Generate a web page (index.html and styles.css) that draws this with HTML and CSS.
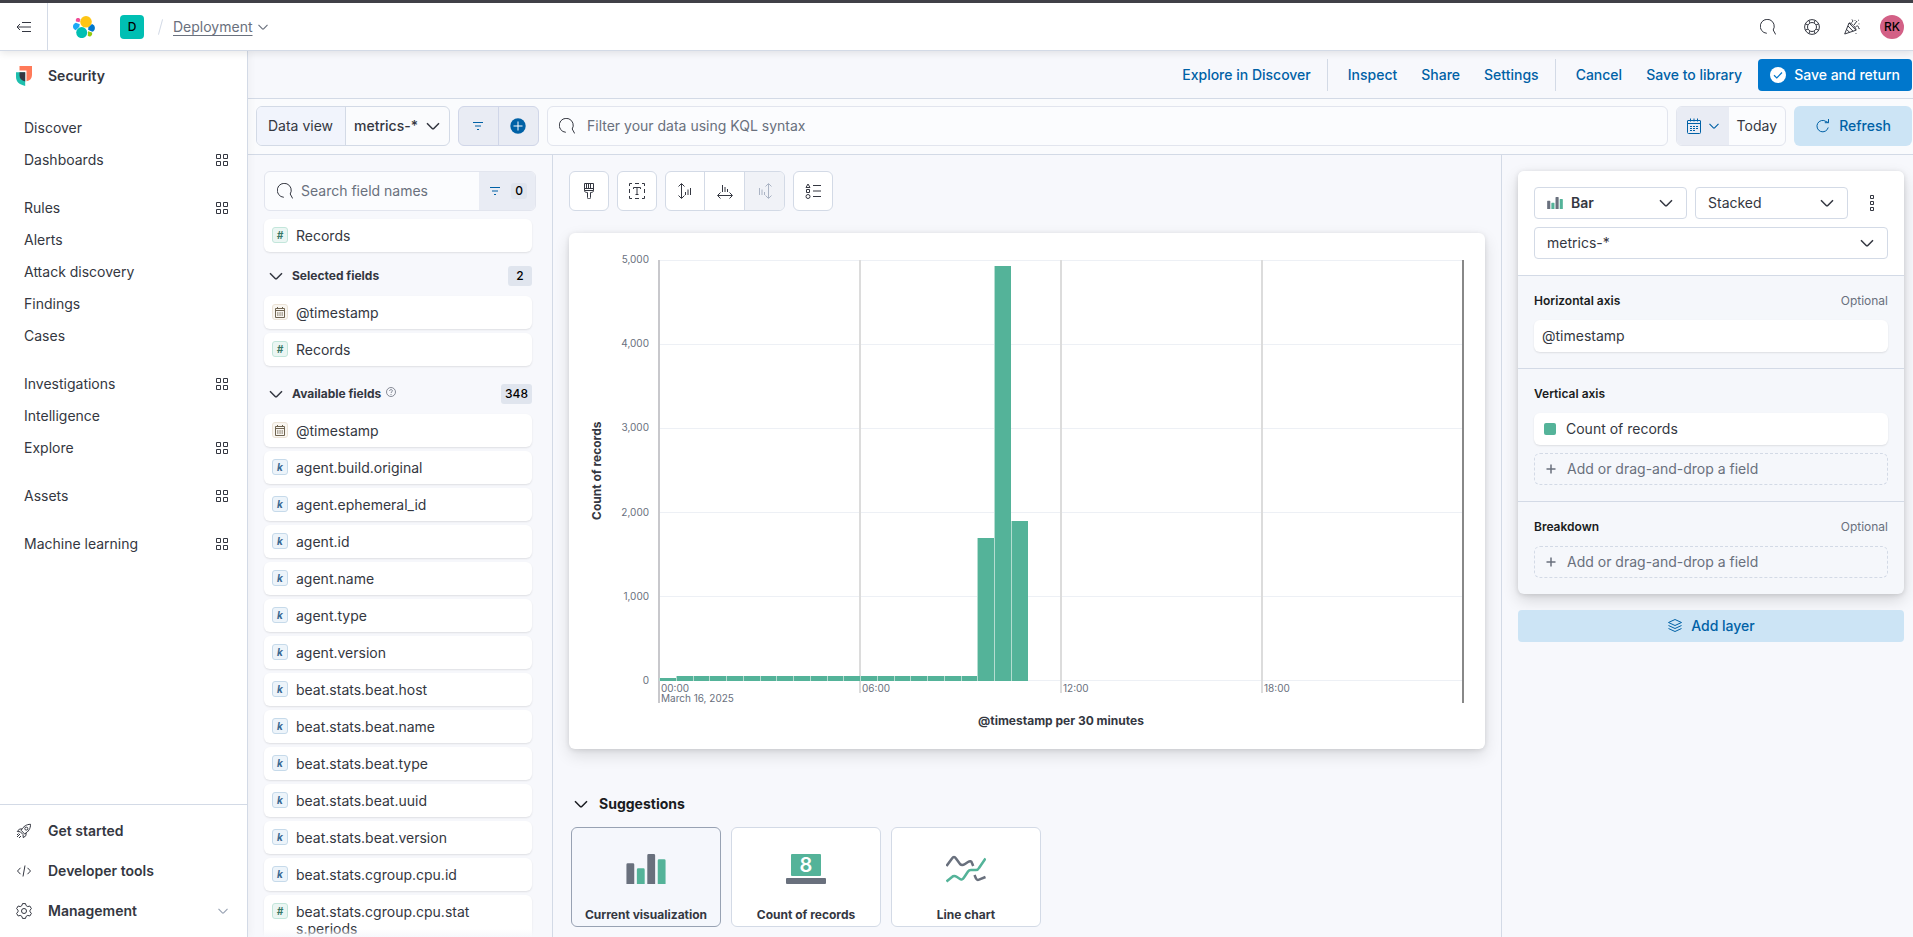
FILE: index.html
```
<!DOCTYPE html>
<html lang="en">
  <head>
    <meta charset="UTF-8" />
    <meta name="viewport" content="width=device-width, initial-scale=1.0" />
    <title>Lens - Elastic</title>
    <link rel="stylesheet" href="styles.css">
  </head>
  <body>
    <svg class="sprite" aria-hidden="true">
      <symbol id="chevron" viewBox="0 0 16 16"><path d="M2 5.2l5.2 5.3a1.1 1.1 0 0 0 1.6 0L14 5.2" /></symbol>
      <symbol id="search" viewBox="0 0 16 16"><path d="M6.8 14.3A7 7 0 1 1 13.200 11l2.500 4.500" /></symbol>
      <symbol id="filter" viewBox="0 0 16 16"><path d="M3 4.5h10M5 8h6M7 11.5h2" /></symbol>
      <symbol id="apps" viewBox="0 0 12 12"><path d="M.5.5h4v4h-4zM7.5.5h4v4h-4zM.5 7.5h4v4h-4zM7.5 7.5h4v4h-4z" /></symbol>
      <symbol id="plus" viewBox="0 0 16 16"><path d="M8 3.5v9M3.5 8h9" /></symbol>
      <symbol id="calendar" viewBox="0 0 16 16">
        <path d="M2 2.5h12a.5.5 0 0 1 .5.5v11.5a1 1 0 0 1-1 1h-11a1 1 0 0 1-1-1V3a.5.5 0 0 1 .5-.5zM1.500 5.500h13M4.500 .5v3M11.500 .5v3M8 .5v3" />
        <path d="M4 8.500h2M7 8.500h2M10 8.500h2M4 10.500h2M7 10.500h2M10 10.500h2M4 12.500h2M7 12.500h2" />
      </symbol>
      <symbol id="date" viewBox="0 0 10 11">
        <path d="M.5 1.500h9v9h-9zM.5 3.500h9M2.500 0v2M7.500 0v2" />
        <path d="M2 6h1.500M4.300 6h1.500M6.500 6H8M2 8h1.500M4.300 8h1.500M6.500 8H8" />
      </symbol>
      <symbol id="bar-icon" viewBox="0 0 30 23">
        <path class="gray" d="M0 8a1 1 0 0 1 1-1h4a1 1 0 0 1 1 1v15H0zM16 1a1 1 0 0 1 1-1h4a1 1 0 0 1 1 1v22h-6z" />
        <path class="green" d="M8 12a1 1 0 0 1 1-1h4a1 1 0 0 1 1 1v11H8zM24 5a1 1 0 0 1 1-1h4a1 1 0 0 1 1 1v18h-6z" />
      </symbol>
    </svg>

    <header class="top-bar">
      <button class="toggle" aria-label="Collapse side navigation">
        <svg class="icon" viewBox="0 0 16 16"><path d="M6 3.500h9M1.500 8H15M6 12.500h9M4 5L1 8l3 3" /></svg>
      </button>
      <a class="logo" href="#" aria-label="Elastic home">
        <svg width="22" height="22" viewBox="0 0 22 22">
          <circle cx="13" cy="5.800" r="5.800" fill="#fec514" />
          <circle cx="8.700" cy="16.600" r="5.500" fill="#00bfb3" />
          <path fill="#f04e98" d="M3.500 2.400c1.500-1 3.500-.4 3.800 1.200L6.500 6.200 3 5.600C2.600 4.200 2.800 3 3.500 2.400z" />
          <path fill="#1ba9f5" d="M2.800 6.800l4 1.500-.6 2.700-3.500 3.300C-.8 13-1 8.200 2.800 6.800z" />
          <path fill="#0077cc" d="M19 8c3.800 1.200 3.800 6.400.3 7.700l-4.200-2 .4-2.500z" />
          <path fill="#93c90e" d="M15 15.200l4 1.400c.5 1.500 0 3-1.300 3.600-1 .5-2 .3-2.900-.4z" />
        </svg>
      </a>
      <span class="avatar space">D</span>
      <span class="slash"></span>
      <button class="crumb"><span>Deployment</span><svg class="icon small"><use href="#chevron" /></svg></button>
      <div class="top-actions">
        <button aria-label="Search"><svg class="icon"><use href="#search" /></svg></button>
        <button aria-label="Help">
          <svg class="icon" viewBox="0 0 16 16"><circle cx="8" cy="8" r="7.400" /><circle cx="8" cy="8" r="4.500" /><path d="M5 1.300l.8 2.600M11 1.300l-.8 2.600M5 14.700l.8-2.600M11 14.700l-.8-2.600M1.300 5l2.600.8M1.300 11l2.600-.8M14.700 5l-2.600.8M14.700 11l-2.600-.8" /></svg>
        </button>
        <button aria-label="What's new">
          <svg class="icon" viewBox="0 0 16 16"><path d="M5 4L.7 15 12 11.200zM5 4c2-.8 7.800 5.500 7 7.200M4 7l5 5.200M2.600 10.500l3.200 3M7.500 3.500c1.500-.5 1.500-2 .5-3M10 6l3-4M11.500 8c1.500-1.500 3-1.300 3 .3s.6 1.700 1.300 1M11 1v.8M14.500.8v.8M15 4.500v.8M12 14v.8" /></svg>
        </button>
        <span class="avatar user">RK</span>
      </div>
    </header>

    <div class="shell">
      <nav class="sidebar">
        <a class="solution" href="#">
          <svg width="16" height="20" viewBox="0 0 16 20">
            <path fill="#ff7a59" d="M3.500 0H16v9c0 3.500-2 5.500-5.500 6.300V4.500h-7z" />
            <path fill="#1fbfae" d="M0 6.200h9.200V20C3 18.500 0 15.500 0 11z" />
            <path fill="#343741" d="M3.500 6.200h5.700v9.200c-4-1-5.700-3-5.700-5.600z" />
          </svg>
          Security
        </a>
        <ul>
          <li><a href="#">Discover</a></li>
          <li><a href="#">Dashboards</a><svg class="apps"><use href="#apps" /></svg></li>
        </ul>
        <ul>
          <li><a href="#">Rules</a><svg class="apps"><use href="#apps" /></svg></li>
          <li><a href="#">Alerts</a></li>
          <li><a href="#">Attack discovery</a></li>
          <li><a href="#">Findings</a></li>
          <li><a href="#">Cases</a></li>
        </ul>
        <ul>
          <li><a href="#">Investigations</a><svg class="apps"><use href="#apps" /></svg></li>
          <li><a href="#">Intelligence</a></li>
          <li><a href="#">Explore</a><svg class="apps"><use href="#apps" /></svg></li>
        </ul>
        <ul>
          <li><a href="#">Assets</a><svg class="apps"><use href="#apps" /></svg></li>
        </ul>
        <ul>
          <li><a href="#">Machine learning</a><svg class="apps"><use href="#apps" /></svg></li>
        </ul>
        <div class="nav-footer">
          <a href="#">
            <svg class="icon" viewBox="0 0 16 16"><path d="M14.500 1.300c-4 0-7 2-9.300 6L8.600 11c4-2.500 6-5.500 5.900-9.700zM6 6H3.500L1.300 8.500l3 .3M10 9.800v2.700l-2.700 2.200-.3-3M4.300 8.800L7 11.500M4 11l-3 3M2.500 10.500l-1.500 1.500M5 13l-2 2" /><circle cx="10.300" cy="5.600" r="1.500" /></svg>
            Get started
          </a>
          <a href="#">
            <svg class="icon" viewBox="0 0 16 16"><path d="M4.500 4.800L1.500 8l3 3.200M11.500 4.800l3 3.200-3 3.200M9 2.500L7 13.500" /></svg>
            Developer tools
          </a>
          <a href="#">
            <svg class="icon" viewBox="0 0 16 16"><path d="M6.500.6h3l.6 2 1.700 1 2-.6 1.600 2.600L14 7.200v1.600l1.400 1.600-1.600 2.600-2-.6-1.700 1-.6 2h-3l-.6-2-1.700-1-2 .6L.6 10.400 2 8.800V7.200L.6 5.600 2.200 3l2 .6 1.700-1z" /><circle cx="8" cy="8" r="2.500" /></svg>
            Management
            <svg class="icon small"><use href="#chevron" /></svg>
          </a>
        </div>
      </nav>

      <main>
        <div class="app-menu">
          <a href="#">Explore in Discover</a>
          <span class="divider"></span>
          <a href="#">Inspect</a>
          <a href="#">Share</a>
          <a href="#">Settings</a>
          <span class="divider"></span>
          <a href="#">Cancel</a>
          <a href="#">Save to library</a>
          <button class="primary">
            <svg width="16" height="16" viewBox="0 0 16 16"><circle cx="8" cy="8" r="8" fill="#fff" /><path d="M4 8.200l2.800 2.700L12 5.500" fill="none" stroke="#0077cc" stroke-width="1.200" /></svg>
            Save and return
          </button>
        </div>

        <div class="query-bar">
          <div class="data-view">
            <span>Data view</span>
            <button>metrics-*<svg class="icon bold"><use href="#chevron" /></svg></button>
          </div>
          <div class="filter-group">
            <button aria-label="Query menu"><svg class="icon"><use href="#filter" /></svg></button>
            <button aria-label="Add filter">
              <svg width="16" height="16" viewBox="0 0 16 16"><circle cx="8" cy="8" r="7.700" fill="#0061a6" /><path d="M8 3.500v9M3.500 8h9" stroke="#fff" /></svg>
            </button>
          </div>
          <div class="kql">
            <svg class="icon"><use href="#search" /></svg>
            <input type="text" aria-label="Filter your data" placeholder="Filter your data using KQL syntax" />
          </div>
          <div class="date-picker">
            <button class="quick" aria-label="Date quick select">
              <svg class="icon"><use href="#calendar" /></svg>
              <svg class="icon small"><use href="#chevron" /></svg>
            </button>
            <button class="range">Today</button>
          </div>
          <button class="refresh">
            <svg class="icon" viewBox="0 0 16 16"><path d="M13.200 9.500a5.700 5.700 0 1 1-2.200-6l2.500 1.200M13.500 1v3.700h-3.700" /></svg>
            Refresh
          </button>
        </div>

        <div class="workspace">
          <aside class="fields">
            <div class="field-search">
              <svg class="icon"><use href="#search" /></svg>
              <input type="text" aria-label="Search field names" placeholder="Search field names" />
              <button aria-label="Filter by type"><svg class="icon"><use href="#filter" /></svg><span>0</span></button>
            </div>
            <div class="field-list">
              <div class="field"><i class="token number">#</i><span>Records</span></div>
              <h3><svg class="icon bold"><use href="#chevron" /></svg>Selected fields<b>2</b></h3>
              <div class="field"><i class="token date"><svg><use href="#date" /></svg></i><span>@timestamp</span></div>
              <div class="field"><i class="token number">#</i><span>Records</span></div>
              <h3>
                <svg class="icon bold"><use href="#chevron" /></svg>Available fields
                <svg class="hint" viewBox="0 0 10 10"><circle cx="5" cy="5" r="4.500" /><path d="M3.600 4c0-2 2.800-1.800 2.800-.2C6.400 5 5 4.800 5 6M5 7v1" /></svg>
                <b>348</b>
              </h3>
              <div class="field"><i class="token date"><svg><use href="#date" /></svg></i><span>@timestamp</span></div>
              <div class="field"><i class="token">k</i><span>agent.build.original</span></div>
              <div class="field"><i class="token">k</i><span>agent.ephemeral_id</span></div>
              <div class="field"><i class="token">k</i><span>agent.id</span></div>
              <div class="field"><i class="token">k</i><span>agent.name</span></div>
              <div class="field"><i class="token">k</i><span>agent.type</span></div>
              <div class="field"><i class="token">k</i><span>agent.version</span></div>
              <div class="field"><i class="token">k</i><span>beat.stats.beat.host</span></div>
              <div class="field"><i class="token">k</i><span>beat.stats.beat.name</span></div>
              <div class="field"><i class="token">k</i><span>beat.stats.beat.type</span></div>
              <div class="field"><i class="token">k</i><span>beat.stats.beat.uuid</span></div>
              <div class="field"><i class="token">k</i><span>beat.stats.beat.version</span></div>
              <div class="field"><i class="token">k</i><span>beat.stats.cgroup.cpu.id</span></div>
              <div class="field"><i class="token number">#</i><span>beat.stats.cgroup.cpu.stats.periods</span></div>
            </div>
          </aside>

          <section class="editor">
            <div class="toolbar">
              <div class="tools">
                <button aria-label="Visual options">
                  <svg class="icon" viewBox="0 0 16 16"><path d="M3.500.5h9v7h-9zM3.500 5.500h9M5.500.5v5M7.500.5v5M9.500.5v5M3.500 7.500c0 1.500 1 2 3 2v5a1.500 1.500 0 0 0 3 0v-5c2 0 3-.5 3-2" /></svg>
                </button>
              </div>
              <div class="tools">
                <button aria-label="Titles and text">
                  <svg class="icon" viewBox="0 0 16 16"><path d="M.5 3V.5H3M6 .5h4M13 .5h2.500V3M15.500 6v4M15.500 13v2.500H13M10 15.500H6M3 15.500H.5V13M.5 10V6M4.500 6V4.500h7V6M8 4.500v7M6.500 11.500h3" /></svg>
                </button>
              </div>
              <div class="tools">
                <button aria-label="Left axis">
                  <svg class="icon" viewBox="0 0 16 16"><path d="M4.500 1v14M1.500 3.500l3-3 3 3M1.500 12.500l3 3 3-3M8.500 9v3M11 6.500V12M13.500 5v7" /></svg>
                </button>
                <button aria-label="Bottom axis">
                  <svg class="icon" viewBox="0 0 16 16"><path d="M1 12.500h14M3.500 9.500l-3 3 3 3M12.500 9.500l3 3-3 3M5.500 2v7M8 4v5M10.500 6v3" /></svg>
                </button>
                <button aria-label="Right axis" disabled>
                  <svg class="icon" viewBox="0 0 16 16"><path d="M11.500 1v14M8.500 3.500l3-3 3 3M8.500 12.500l3 3 3-3M2.500 5v7M5 6.500V12M7.500 9v3" /></svg>
                </button>
              </div>
              <div class="tools">
                <button aria-label="Legend">
                  <svg class="icon" viewBox="0 0 16 16"><path d="M3 1L1 4.500h4zM1.500 6.500h3v3h-3zM8 2.500h8M8 8h8M8 13.500h8" /><circle cx="3" cy="13.500" r="2" /></svg>
                </button>
              </div>
            </div>

            <div class="chart-card">
              <div class="y-title">Count of records</div>
              <div class="y-labels">
                <span>5,000</span><span>4,000</span><span>3,000</span><span>2,000</span><span>1,000</span><span>0</span>
              </div>
              <div class="h-lines"><i></i><i></i><i></i><i></i><i></i><i></i></div>
              <div class="ticks">
                <div class="first"><span>00:00<br>March 16, 2025</span></div>
                <div><span>06:00</span></div>
                <div><span>12:00</span></div>
                <div><span>18:00</span></div>
              </div>
              <div class="bars"></div>
              <div class="x-title">@timestamp per 30 minutes</div>
            </div>

            <div class="suggestions">
              <h2><svg class="icon bold"><use href="#chevron" /></svg>Suggestions</h2>
              <div class="cards">
                <button class="current">
                  <svg width="40" height="30"><use href="#bar-icon" /></svg>
                  <span>Current visualization</span>
                </button>
                <button>
                  <svg width="40" height="30" viewBox="0 0 40 30"><rect class="green" x="5" width="30" height="22" rx="1" /><rect class="gray" y="24" width="40" height="6" rx="1" /><text x="20" y="18">8</text></svg>
                  <span>Count of records</span>
                </button>
                <button>
                  <svg class="lines" width="40" height="30" viewBox="0 0 40 30"><path class="gray-line" d="M.5 12L6 4.500q2-3 4 0l4 5.500q2 2 5 0l3-2q3-2 4 1l1.200 3M28.500 21l1.500 3.500q1 2 3 1.200l6.500-2.700" /><path class="green-line" d="M.5 27.500L6 23q2-2 5 0l3 2q2 1.500 4-1.500l4-6q1-1.500 3-1.500h5q2 0 3-2l6.500-9.500" /></svg>
                  <span>Line chart</span>
                </button>
              </div>
            </div>
          </section>

          <aside class="config">
            <div class="layer">
              <div class="layer-head">
                <div class="row">
                  <div class="select strong">
                    <svg width="16" height="12"><use href="#bar-icon" /></svg>
                    <select aria-label="Chart type"><option>Bar</option></select>
                    <svg class="icon bold"><use href="#chevron" /></svg>
                  </div>
                  <div class="select">
                    <select aria-label="Stacking"><option>Stacked</option></select>
                    <svg class="icon bold"><use href="#chevron" /></svg>
                  </div>
                  <button class="dots" aria-label="Layer actions">
                    <svg class="icon" viewBox="0 0 16 16"><path d="M6.500.5h3v3h-3zM6.500 6.500h3v3h-3zM6.500 12.500h3v3h-3z" /></svg>
                  </button>
                </div>
                <div class="select">
                  <select aria-label="Layer data view"><option>metrics-*</option></select>
                  <svg class="icon bold"><use href="#chevron" /></svg>
                </div>
              </div>
              <div class="dimension">
                <h4>Horizontal axis<small>Optional</small></h4>
                <button class="filled">@timestamp</button>
              </div>
              <div class="dimension">
                <h4>Vertical axis</h4>
                <button class="filled"><i class="swatch"></i>Count of records</button>
                <button class="empty"><svg class="icon bold"><use href="#plus" /></svg>Add or drag-and-drop a field</button>
              </div>
              <div class="dimension">
                <h4>Breakdown<small>Optional</small></h4>
                <button class="empty"><svg class="icon bold"><use href="#plus" /></svg>Add or drag-and-drop a field</button>
              </div>
            </div>
            <button class="add-layer">
              <svg class="icon" viewBox="0 0 16 16"><path d="M8 1.500l6.500 3L8 7.500l-6.500-3zM1.500 7.500l6.500 3 6.500-3M1.500 10.500l6.500 3 6.500-3" /></svg>
              Add layer
            </button>
          </aside>
        </div>
      </main>
    </div>

    <script>
      // records per 30 minutes, starting at midnight
      const counts = [35];
      for (let i = 1; i < 19; i++) counts.push(60);
      counts.push(1695, 4925, 1895);

      document.querySelector(".bars").innerHTML = counts
        .map((count) => `<i style="height: ${(count / 5000) * 100}%"></i>`)
        .join("");
    </script>
  </body>
</html>
```

FILE: styles.css
```
* {
  box-sizing: border-box;
}
body {
  margin: 0;
  height: 100vh;
  display: flex;
  flex-direction: column;
  overflow: hidden;
  font-family: Inter, "Liberation Sans", sans-serif;
  font-size: 14px;
  line-height: 20px;
  color: #343741;
  background: #f7f8fc;
}
button,
input,
select {
  font: inherit;
  color: inherit;
  background: none;
  border: none;
  padding: 0;
  margin: 0;
  outline: none;
}
button {
  cursor: pointer;
}
a {
  color: inherit;
  text-decoration: none;
}
h2,
h3,
h4,
ul {
  margin: 0;
  padding: 0;
  list-style: none;
}
svg {
  flex: none;
}
.sprite {
  position: absolute;
  width: 0;
  height: 0;
}
.icon {
  width: 16px;
  height: 16px;
  fill: none;
  stroke: currentColor;
  stroke-width: 1;
}
.icon.small {
  width: 12px;
  height: 12px;
  stroke-width: 1.5;
}
.icon.bold {
  stroke-width: 1.5;
}
.gray {
  fill: #69707d;
}
.green {
  fill: #54b399;
}

/* top bar */
.top-bar {
  position: relative;
  z-index: 2;
  flex: none;
  height: 51px;
  display: flex;
  align-items: center;
  background: #fff;
  border-top: 3px solid #404047;
  border-bottom: 1px solid #d3dae6;
  box-shadow: 0 2px 8px rgba(0, 0, 0, 0.1);
}
.toggle {
  width: 48px;
  height: 47px;
  display: flex;
  align-items: center;
  justify-content: center;
  border-right: 1px solid #d3dae6;
}
.logo {
  display: flex;
  margin: 0 25px;
}
.avatar {
  width: 24px;
  height: 24px;
  display: flex;
  align-items: center;
  justify-content: center;
  font-size: 12px;
  font-weight: 500;
  color: #000;
}
.space {
  border-radius: 4px;
  background: #00bfb3;
}
.user {
  border-radius: 50%;
  background: #d36086;
}
.slash {
  width: 1px;
  height: 16px;
  margin: 0 12px 0 16px;
  background: #d3dae6;
  transform: rotate(15deg);
}
.crumb {
  display: flex;
  align-items: center;
  gap: 4px;
  color: #69707d;
}
.crumb span {
  text-decoration: underline;
  text-underline-offset: 3px;
}
.top-actions {
  margin-left: auto;
  margin-right: 9px;
  display: flex;
  align-items: center;
}
.top-actions button {
  display: flex;
  padding: 0 12px;
}
.top-actions button + button {
  padding-left: 16px;
}
.top-actions button:nth-child(3) {
  padding-left: 12px;
  padding-right: 20px;
}

.shell {
  flex: 1;
  min-height: 0;
  display: flex;
}

/* side navigation */
.sidebar {
  position: relative;
  z-index: 1;
  flex: none;
  width: 248px;
  display: flex;
  flex-direction: column;
  background: #fff;
  border-right: 1px solid #d3dae6;
  box-shadow: 2px 0 8px rgba(0, 0, 0, 0.04);
}
.solution {
  display: flex;
  align-items: center;
  gap: 16px;
  padding: 15px 16px 26px;
  font-weight: 600;
}
.sidebar ul {
  margin-bottom: 16px;
}
.sidebar li {
  height: 32px;
  padding: 0 19px 0 24px;
  display: flex;
  align-items: center;
  justify-content: space-between;
}
.apps {
  width: 12px;
  height: 12px;
  fill: none;
  stroke: currentColor;
}
.nav-footer {
  margin-top: auto;
  padding: 6px 0;
  border-top: 1px solid #d3dae6;
}
.nav-footer a {
  height: 40px;
  display: flex;
  align-items: center;
  gap: 16px;
  padding: 0 18px 0 16px;
  font-weight: 600;
}
.nav-footer .small {
  margin-left: auto;
  color: #98a2b3;
}

main {
  flex: 1;
  min-width: 0;
  display: flex;
  flex-direction: column;
}

/* application menu */
.app-menu {
  flex: none;
  display: flex;
  align-items: center;
  justify-content: flex-end;
  gap: 8px;
  padding: 8px 1px 7px;
  font-weight: 500;
  color: #0061a6;
}
.app-menu a {
  padding: 0 8px;
}
.divider {
  width: 1px;
  height: 32px;
  margin-right: 4px;
  background: #d3dae6;
}
.primary {
  height: 32px;
  display: flex;
  align-items: center;
  gap: 8px;
  padding: 0 12px;
  border-radius: 4px;
  background: #0077cc;
  color: #fff;
}

/* query bar */
.query-bar {
  flex: none;
  display: flex;
  gap: 8px;
  padding: 7px 1px 8px 8px;
  background: #fafbfd;
  border-top: 1px solid #d3dae6;
  border-bottom: 1px solid #d3dae6;
}
.query-bar > * {
  height: 40px;
  display: flex;
  align-items: center;
  border-radius: 6px;
}
.data-view {
  border: 1px solid #d3dae6;
  overflow: hidden;
}
.data-view span {
  align-self: stretch;
  display: flex;
  align-items: center;
  padding: 0 12px 0 11px;
  background: #f1f4fc;
  border-right: 1px solid #d3dae6;
}
.data-view button {
  display: flex;
  align-items: center;
  gap: 7px;
  padding: 0 8px;
  font-weight: 500;
}
.filter-group {
  background: #e9ecf4;
  border: 1px solid #d0d6e8;
  color: #0061a6;
}
.filter-group button {
  width: 39px;
  height: 38px;
  display: flex;
  align-items: center;
  justify-content: center;
}
.filter-group button + button {
  width: 40px;
  border-left: 1px solid #d0d6e8;
}
.kql {
  flex: 1;
  gap: 12px;
  padding: 0 11px;
  border: 1px solid #e2e5ee;
  background: #fbfcfe;
}
.kql input {
  flex: 1;
}
input::placeholder {
  color: #69707d;
  opacity: 1;
}
.date-picker {
  border: 1px solid #e2e5ee;
  background: #fbfcfe;
  overflow: hidden;
}
.quick {
  height: 38px;
  display: flex;
  align-items: center;
  gap: 6px;
  padding: 0 9px;
  background: #e9ecf4;
  color: #0061a6;
}
.range {
  padding: 0 8px;
}
.refresh {
  width: 118px;
  justify-content: center;
  gap: 8px;
  background: #cce4f5;
  color: #0061a6;
  font-weight: 500;
}

.workspace {
  flex: 1;
  min-height: 0;
  display: flex;
}

/* field list */
.fields {
  position: relative;
  flex: none;
  width: 305px;
  padding: 16px 16px 0;
  border-right: 1px solid #d3dae6;
  overflow: hidden;
}
.fields::after {
  content: "";
  position: absolute;
  left: 0;
  right: 0;
  bottom: 0;
  height: 8px;
  background: linear-gradient(rgba(247, 248, 252, 0), #f7f8fc);
}
.field-search {
  height: 40px;
  display: flex;
  align-items: center;
  gap: 8px;
  padding-left: 12px;
  border: 1px solid #e2e5ee;
  border-radius: 6px;
  background: #fbfcfe;
  overflow: hidden;
}
.field-search input {
  flex: 1;
  min-width: 0;
}
.field-search button {
  height: 38px;
  display: flex;
  align-items: center;
  gap: 8px;
  padding: 0 8px;
  background: #e9ecf4;
  color: #0061a6;
}
.field-search span {
  width: 16px;
  line-height: 16px;
  border-radius: 3px;
  background: #e0e5ee;
  color: #000;
  font-size: 12px;
  font-weight: 500;
}
.field-list {
  padding: 8px 4px 0 0;
}
.field {
  display: flex;
  gap: 8px;
  padding: 8px;
  margin-bottom: 4px;
  line-height: 17px;
  background: #fff;
  border-radius: 6px;
  box-shadow: 0 1px 2px rgba(0, 0, 0, 0.1);
}
.field span {
  max-width: 176px;
  word-break: break-all;
}
.token {
  flex: none;
  width: 16px;
  height: 16px;
  display: flex;
  align-items: center;
  justify-content: center;
  border: 1px solid #c6daea;
  border-radius: 3px;
  background: #edf4fa;
  color: #396891;
  font-size: 10px;
  font-weight: 700;
}
.token.number {
  border-color: #c3e6db;
  background: #ebf6f3;
  color: #387765;
}
.token.date {
  border-color: #ebe2d5;
  background: #f9f6f1;
  color: #6f6450;
}
.token svg {
  width: 10px;
  height: 11px;
  fill: none;
  stroke: currentColor;
}
.field-list h3 {
  display: flex;
  align-items: center;
  padding: 10px 0 10px 4px;
  font-size: 12px;
  font-weight: 700;
}
.field ~ .field + h3 {
  margin-top: 8px;
}
.field-list h3 .bold {
  margin-right: 8px;
}
.hint {
  width: 10px;
  height: 10px;
  margin: -4px 0 0 5px;
  fill: none;
  stroke: #69707d;
  stroke-width: 0.8;
}
.field-list b {
  min-width: 24px;
  margin-left: auto;
  padding: 0 4px;
  border-radius: 3px;
  background: #e0e5ee;
  color: #000;
  text-align: center;
  font-weight: 500;
}

/* chart editor */
.editor {
  flex: 1;
  min-width: 0;
  display: flex;
  flex-direction: column;
  padding: 16px 16px 10px;
}
.toolbar {
  display: flex;
  gap: 8px;
  margin-bottom: 22px;
}
.tools {
  display: flex;
  border: 1px solid #d3dae6;
  border-radius: 6px;
  background: #fff;
  overflow: hidden;
}
.tools button {
  width: 38px;
  height: 38px;
  display: flex;
  align-items: center;
  justify-content: center;
}
.tools button + button {
  width: 40px;
  border-left: 1px solid #d3dae6;
}
.tools button:disabled {
  background: #f0f2f7;
  color: #abb4c4;
}
.chart-card {
  flex: 1;
  display: grid;
  grid-template-columns: 16px 44px 1fr;
  grid-template-rows: 1fr 12px 10px auto;
  padding: 27px 22px 18px 20px;
  background: #fff;
  border-radius: 6px;
  box-shadow: 0 1px 5px rgba(0, 0, 0, 0.1), 0 6px 16px rgba(0, 0, 0, 0.12);
}
.y-title {
  grid-area: 1 / 1;
  writing-mode: vertical-rl;
  transform: rotate(180deg);
  text-align: center;
  font-size: 12px;
  line-height: 16px;
  font-weight: 700;
}
.y-labels {
  grid-area: 1 / 2;
  display: flex;
  flex-direction: column;
  justify-content: space-between;
  margin: -7px 0 -5px;
  text-align: right;
  font-size: 10px;
  line-height: 12px;
  color: #69707d;
}
.h-lines,
.bars {
  margin-left: 10px;
}
.h-lines {
  grid-area: 1 / 3;
  display: flex;
  flex-direction: column;
  justify-content: space-between;
}
.h-lines i {
  height: 1px;
  background: #edf0f5;
}
.ticks {
  grid-area: 1 / 3 / 4 / 4;
  display: grid;
  grid-template-columns: repeat(4, 1fr);
  margin-right: -1px;
  margin-left: 9px;
  border-right: 2px solid #888;
}
.ticks div {
  display: flex;
  align-items: flex-end;
  margin-bottom: 10px;
  padding-left: 1px;
  border-left: 2px solid #dcdcdc;
  font-size: 10px;
  line-height: 10px;
  color: #69707d;
}
.ticks .first {
  margin-bottom: 0;
  border-color: #c8c8cc;
}
.bars {
  grid-area: 1 / 3;
  display: grid;
  grid-template-columns: repeat(48, 1fr);
  align-items: end;
}
.bars i {
  background: #54b399;
  border-left: 1px solid #b5ddd1;
}
.x-title {
  grid-area: 4 / 3;
  margin-left: 10px;
  padding-top: 8px;
  text-align: center;
  font-size: 12px;
  font-weight: 700;
}

/* suggestions */
.suggestions {
  padding: 45px 2px 0;
}
.suggestions h2 {
  display: flex;
  align-items: center;
  gap: 10px;
  padding-left: 2px;
  font-size: 14px;
  font-weight: 700;
  color: #1a1c21;
}
.cards {
  display: flex;
  gap: 10px;
  margin-top: 13px;
}
.cards button {
  width: 150px;
  height: 100px;
  display: flex;
  flex-direction: column;
  align-items: center;
  justify-content: space-between;
  padding: 26px 0 1px;
  border: 1px solid #d3dae6;
  border-radius: 6px;
  background: #fff;
  font-size: 12px;
  font-weight: 700;
}
.cards .current {
  border-color: #98a2b3;
  background: #f5f7fc;
}
.cards text {
  fill: #fff;
  font-size: 20px;
  font-weight: 600;
  text-anchor: middle;
}
.lines {
  fill: none;
  stroke-width: 2.5;
}
.gray-line {
  stroke: #69707d;
}
.green-line {
  stroke: #54b399;
}

/* layer configuration */
.config {
  flex: none;
  width: 412px;
  padding: 16px 9px 0 16px;
  border-left: 1px solid #d3dae6;
}
.layer {
  border-radius: 6px;
  background: #f5f7fb;
  box-shadow: 0 1px 5px rgba(0, 0, 0, 0.12), 0 6px 16px rgba(0, 0, 0, 0.14);
}
.layer-head {
  padding: 16px;
  border-radius: 6px 6px 0 0;
  background: #fff;
}
.row {
  display: flex;
  gap: 8px;
  margin-bottom: 8px;
}
.row .select {
  flex: 1;
}
.select {
  height: 32px;
  display: flex;
  align-items: center;
  gap: 8px;
  padding: 0 12px;
  border: 1px solid #d3dae6;
  border-radius: 4px;
}
.select select {
  flex: 1;
  min-width: 0;
  appearance: none;
}
.strong {
  font-weight: 600;
}
.dots {
  width: 32px;
  display: flex;
  align-items: center;
  justify-content: center;
}
.dimension {
  display: flex;
  flex-direction: column;
  padding: 16px;
  border-top: 1px solid #d3dae6;
}
.dimension h4 {
  display: flex;
  justify-content: space-between;
  margin-bottom: 10px;
  font-size: 12px;
  line-height: 18px;
  font-weight: 600;
  color: #1a1c21;
}
.dimension small {
  font-size: 12px;
  font-weight: 400;
  color: #69707d;
}
.dimension button {
  height: 32px;
  display: flex;
  align-items: center;
  border-radius: 6px;
}
.dimension button + button {
  margin-top: 8px;
}
.filled {
  padding: 0 8px;
  background: #fff;
  box-shadow: 0 1px 2px rgba(0, 0, 0, 0.1);
}
.dimension .filled {
  padding: 0 8px;
}
.swatch {
  width: 12px;
  height: 12px;
  margin: 0 10px 0 2px;
  border-radius: 2px;
  background: #54b399;
}
.dimension .empty {
  gap: 8px;
  padding: 0 8px;
  border: 1px dashed #d3dae6;
  color: #69707d;
}
.add-layer {
  width: 100%;
  height: 32px;
  display: flex;
  align-items: center;
  justify-content: center;
  gap: 8px;
  margin-top: 16px;
  border-radius: 4px;
  background: #cce4f5;
  color: #0061a6;
  font-weight: 500;
}
```
